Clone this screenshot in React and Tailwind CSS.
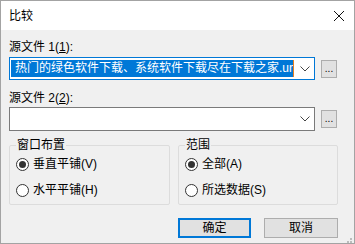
import React from "react";

const font = {
  fontFamily: '"Liberation Sans", "Noto Sans CJK SC", sans-serif',
};

const Chevron = () => (
  <svg width="10" height="6" viewBox="0 0 10 6" className="shrink-0">
    <path d="M0.5 0.5 L5 5 L9.5 0.5" fill="none" stroke="#444" strokeWidth="1" />
  </svg>
);

const Radio = ({ checked, label }) => (
  <div className="flex items-center gap-[4px] h-[16px]">
    <span className="w-[13px] h-[13px] rounded-full border border-[#333] bg-white flex items-center justify-center shrink-0">
      {checked && <span className="w-[7px] h-[7px] rounded-full bg-[#333]" />}
    </span>
    <span>{label}</span>
  </div>
);

const Browse = () => (
  <button className="w-[16px] h-[18px] bg-[#e1e1e1] border border-[#adadad] flex items-end justify-center pb-[3px] text-[10px] leading-none">
    ...
  </button>
);

export default function App() {
  return (
    <div
      className="w-[355px] h-[244px] border border-[#a3a3a3] bg-[#f0f0f0] flex flex-col text-[12px] text-black overflow-hidden"
      style={font}
    >
      {/* title bar */}
      <div className="h-[29px] bg-white flex items-center justify-between pl-[8px] pr-[9px] shrink-0">
        <span className="text-[12px]">比较</span>
        <svg width="12" height="12" viewBox="0 0 12 12">
          <path d="M1 1 L11 11 M11 1 L1 11" stroke="#111" strokeWidth="1" />
        </svg>
      </div>

      <div className="flex flex-col pl-[8px] pr-[16px]">
        <div className="mt-[9px] h-[16px] leading-[16px]">
          源文件 1(<span className="underline">1</span>):
        </div>
        <div className="mt-[2px] flex items-center gap-[6px]">
          <div className="w-[306px] h-[23px] border border-[#0078d7] bg-white flex items-center pl-[1px] pr-[4px]">
            <div className="w-[282px] h-[17px] bg-[#0078d7] text-white overflow-hidden whitespace-nowrap leading-[17px] flex justify-end">
              <span>热门的绿色软件下载、系统软件下载尽在下载之家.ur</span>
            </div>
            <span className="w-[1px] h-[17px] bg-[#e8801f] shrink-0" />
            <div className="flex-1 flex justify-end">
              <Chevron />
            </div>
          </div>
          <Browse />
        </div>

        <div className="mt-[10px] h-[16px] leading-[16px]">
          源文件 2(<span className="underline">2</span>):
        </div>
        <div className="mt-[1px] flex items-center gap-[6px]">
          <div className="w-[306px] h-[24px] border border-[#7a7a7a] bg-white flex items-center justify-end pr-[4px]">
            <Chevron />
          </div>
          <Browse />
        </div>

        <div className="mt-[7px] flex gap-[8px]">
          <fieldset className="w-[161px] h-[67px] border border-[#dcdcdc] rounded-[2px] pl-[6px] pt-[4px] flex flex-col gap-[10px]">
            <legend className="px-[1px] leading-[14px]">窗口布置</legend>
            <Radio checked label="垂直平铺(V)" />
            <Radio label="水平平铺(H)" />
          </fieldset>
          <fieldset className="w-[160px] h-[67px] border border-[#dcdcdc] rounded-[2px] pl-[6px] pt-[4px] flex flex-col gap-[10px]">
            <legend className="px-[1px] leading-[14px]">范围</legend>
            <Radio checked label="全部(A)" />
            <Radio label="所选数据(S)" />
          </fieldset>
        </div>

        <div className="mt-[13px] flex justify-end gap-[13px]">
          <button className="w-[73px] h-[20px] border-2 border-[#0078d7] bg-[#e1e1e1] leading-none">
            确定
          </button>
          <button className="w-[74px] h-[20px] border border-[#adadad] bg-[#e1e1e1] leading-none">
            取消
          </button>
        </div>
      </div>

      <div className="flex-1 flex justify-end items-end pr-[2px] pb-[2px]">
        <svg width="8" height="8" viewBox="0 0 8 8">
          <rect x="6" y="0" width="2" height="2" fill="#bcbcbc" />
          <rect x="3" y="3" width="2" height="2" fill="#bcbcbc" />
          <rect x="6" y="3" width="2" height="2" fill="#bcbcbc" />
          <rect x="0" y="6" width="2" height="2" fill="#bcbcbc" />
          <rect x="3" y="6" width="2" height="2" fill="#bcbcbc" />
          <rect x="6" y="6" width="2" height="2" fill="#bcbcbc" />
        </svg>
      </div>
    </div>
  );
}
